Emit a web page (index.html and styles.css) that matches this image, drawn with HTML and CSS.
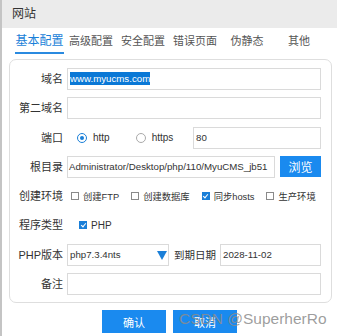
FILE: index.html
```html
<!DOCTYPE html>
<html>
<head>
    <meta charset="utf-8">
    <title>网站</title>
    <link rel="stylesheet" href="styles.css">
</head>
<body>
<div class="window">
    <div class="titlebar">网站</div>

    <div class="tabs">
        <span class="tab active">基本配置</span>
        <span class="tab">高级配置</span>
        <span class="tab">安全配置</span>
        <span class="tab">错误页面</span>
        <span class="tab">伪静态</span>
        <span class="tab">其他</span>
    </div>

    <div class="panel">
        <label class="lbl">域名</label>
        <div class="field"><span class="selected">www.myucms.com</span></div>

        <label class="lbl">第二域名</label>
        <div class="field"></div>

        <label class="lbl">端口</label>
        <div class="line">
            <span class="radio on"></span><span class="opt">http</span>
            <span class="radio"></span><span class="opt">https</span>
            <div class="field port">80</div>
        </div>

        <label class="lbl">根目录</label>
        <div class="line">
            <div class="field path">Administrator/Desktop/php/110/MyuCMS_jb51</div>
            <button class="btn browse">浏览</button>
        </div>

        <label class="lbl">创建环境</label>
        <div class="line checks">
            <span class="check"></span><span class="opt">创建FTP</span>
            <span class="check"></span><span class="opt">创建数据库</span>
            <span class="check on"></span><span class="opt">同步hosts</span>
            <span class="check"></span><span class="opt">生产环境</span>
        </div>

        <label class="lbl">程序类型</label>
        <div class="line">
            <span class="check on php"></span><span class="opt">PHP</span>
        </div>

        <label class="lbl">PHP版本</label>
        <div class="line">
            <div class="field select">php7.3.4nts
                <svg class="arrow" width="10" height="9" viewBox="0 0 10 9"><path d="M0 0H10L5 9Z" fill="#1a7fd8"/></svg>
            </div>
            <span class="lbl2">到期日期</span>
            <div class="field date">2028-11-02</div>
        </div>

        <label class="lbl">备注</label>
        <div class="field"></div>
    </div>

    <div class="actions">
        <button class="btn big">确认</button>
        <button class="btn big">取消</button>
        <span class="watermark">CSDN @SuperherRo</span>
    </div>
</div>
</body>
</html>
```

FILE: styles.css
```css
body{
    margin: 0;
    padding: 0;
    background: #fff;
    font-family: "Liberation Sans", "Noto Sans CJK SC", sans-serif;
    color: #333;}

.window{
    width: 337px;
    height: 336px;
    box-sizing: border-box;
    border-left: 2px solid #c4c4c4;
    overflow: hidden;}

.titlebar{
    height: 28px;
    background: #ebebeb;
    font-size: 12px;
    line-height: 28px;
    padding-left: 10px;}

.tabs{
    display: flex;
    padding: 0 0 0 11px;
    height: 26px;
    margin-bottom: 5px;}

.tab{
    width: 52px;
    text-align: center;
    font-size: 11px;
    line-height: 26px;
    color: #555;}

.tab.active{
    color: #1a7fd8;
    font-size: 12px;
    box-shadow: inset 0 -2px 0 #2a8ae0;
    margin: 0 1px 0 2px;
    width: 49px;}

.panel{
    margin: 0 5px 0 7px;
    border: 1px solid #dedede;
    border-radius: 7px;
    padding: 8px 10px 7px 0;
    display: grid;
    grid-template-columns: 53px minmax(0, 1fr);
    column-gap: 4px;
    row-gap: 7.3px;
    grid-auto-rows: 22px;}

.lbl{
    font-size: 11px;
    text-align: right;
    line-height: 22px;
    white-space: nowrap;}

.field{
    border: 1px solid #dadada;
    background: #fff;
    box-sizing: border-box;
    height: 22px;
    font-size: 9.7px;
    line-height: 20px;
    padding: 0 2px;
    white-space: nowrap;
    overflow: hidden;}

.selected{
    background: #0a78d6;
    color: #fff;
    padding: 1px 0;}

.line{
    display: flex;
    align-items: center;
    font-size: 10px;
    min-width: 0;}

.opt{
    margin-left: 5px;
    white-space: nowrap;}

.radio{
    width: 10px;
    height: 10px;
    border: 1px solid #aaa;
    border-radius: 50%;
    box-sizing: border-box;
    margin-left: 10px;
    flex: none;
    position: relative;}

.radio + .opt{
    margin-left: 6px;}

.radio + .opt + .radio{
    margin-left: 26px;}

.radio.on{
    border-color: #1a7fd8;}

.radio.on::after{
    content: "";
    position: absolute;
    left: 2px;
    top: 2px;
    width: 4px;
    height: 4px;
    border-radius: 50%;
    background: #1a7fd8;}

.port{
    margin-left: auto;
    width: 128px;
    flex: none;}

.path{
    flex: 1;
    min-width: 0;
    padding: 0 1px;}

.btn{
    border: none;
    background: #1a8aef;
    color: #fff;
    font-family: "Noto Sans CJK SC", sans-serif;
    padding: 0;
    cursor: pointer;}

.browse{
    width: 41px;
    height: 21px;
    margin-left: 5px;
    flex: none;
    font-size: 12px;}

.check{
    width: 8px;
    height: 8px;
    border: 1px solid #8a8a8a;
    box-sizing: border-box;
    flex: none;
    margin-left: 11px;
    position: relative;}

.checks .opt{
    font-size: 9.3px;}

.checks .check:first-child{
    margin-left: 4px;}

.checks .check{
    margin-left: 12px;}

.check + .opt{
    margin-left: 4px;}

.check.on{
    border-color: #1a7fd8;
    background: #1a7fd8;}

.check.on::after{
    content: "";
    position: absolute;
    left: 1.5px;
    top: 0px;
    width: 2px;
    height: 4px;
    border: solid #fff;
    border-width: 0 1.2px 1.2px 0;
    transform: rotate(40deg);}

.check.php{
    margin-left: 12px;}

.select{
    width: 102px;
    flex: none;
    position: relative;}

.arrow{
    position: absolute;
    right: 1px;
    top: 6px;}

.lbl2{
    font-size: 10.5px;
    margin: 0 4px 0 5px;
    white-space: nowrap;}

.date{
    flex: 1;}

.actions{
    position: relative;
    display: flex;
    gap: 7px;
    padding: 7px 0 0 100px;}

.big{
    width: 64px;
    height: 23px;
    font-size: 11px;}

.watermark{
    position: absolute;
    left: 177px;
    top: 7px;
    font-family: "Liberation Sans", sans-serif;
    font-size: 15.5px;
    color: rgba(140,140,140,0.85);
    white-space: nowrap;}
```
